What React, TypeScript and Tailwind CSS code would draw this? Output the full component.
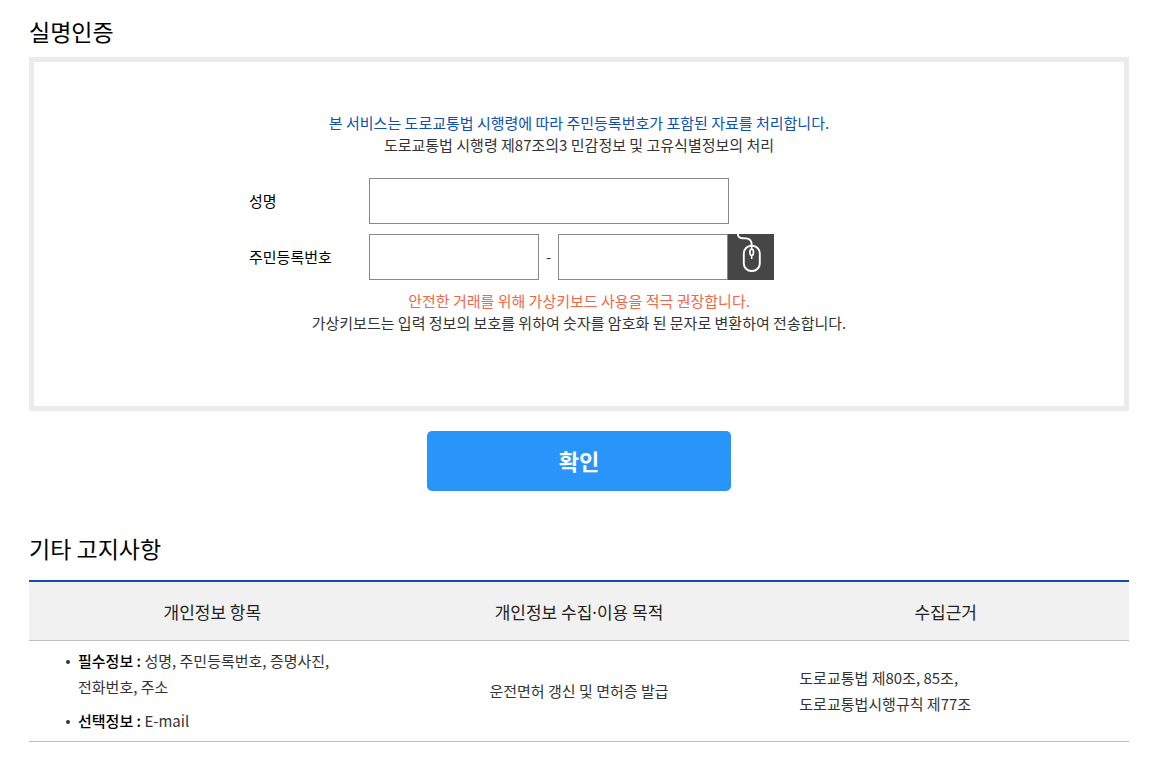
import React from "react";

function MouseIcon() {
  return (
    <svg viewBox="0 0 46 46" className="size-full" fill="none" stroke="#fff" aria-hidden="true">
      <path d="M9.800 0C10 2.800 11.500 4.200 14.500 4.300L18 4.400C22 4.600 23.700 6.500 23.700 11" strokeWidth="1.900" />
      <rect x="15.800" y="11.800" width="16" height="25.200" rx="7.600" strokeWidth="1.900" />
      <path d="M23.700 11V15.500M23.700 21V25" strokeWidth="1.500" />
      <ellipse cx="23.700" cy="18.300" rx="1.800" ry="3.200" strokeWidth="1.700" />
    </svg>
  );
}

const inputClass = "h-[46px] border border-[#888888] bg-white px-3 text-[15px] text-black outline-none";

function Bullet({ label, children }: { label: string; children: React.ReactNode }) {
  return (
    <li className="flex">
      <span className="mt-3 mr-2 size-1 shrink-0 rounded-full bg-[#333333]" aria-hidden="true" />
      <span>
        <strong className="font-medium text-black">{label} :</strong> {children}
      </span>
    </li>
  );
}

export default function App() {
  return (
    <main className="bg-white pt-3.5 pr-[37px] pb-5 pl-[29px] font-['Noto_Sans_CJK_KR',sans-serif] text-[15px] leading-[22px] text-[#333333]">
      <section>
        <h2 className="text-[23px] leading-[34px] text-black">실명인증</h2>
        <form onSubmit={(e) => e.preventDefault()}>
          <div className="mt-[9px] border-5 border-[#ebebeb] pt-[50px] pb-[72px]">
            <p className="text-center text-[#0f4fb0]">
              본 서비스는 도로교통법 시행령에 따라 주민등록번호가 포함된 자료를 처리합니다.
            </p>
            <p className="text-center">도로교통법 시행령 제87조의3 민감정보 및 고유식별정보의 처리</p>

            <div className="mx-auto mt-[22px] mb-2.5 flex max-w-[660px] flex-col gap-2.5">
              <div className="flex items-center">
                <label htmlFor="name" className="w-[120px] text-black">성명</label>
                <input id="name" type="text" className={`${inputClass} w-[360px]`} />
              </div>
              <div className="flex items-center">
                <label htmlFor="rrn-front" className="w-[120px] text-black">주민등록번호</label>
                <input id="rrn-front" type="text" className={`${inputClass} w-[170px]`} />
                <span className="w-[19px] text-center">-</span>
                <input type="password" aria-label="주민등록번호 뒷자리" className={`${inputClass} w-[170px]`} />
                <button type="button" aria-label="가상키보드" className="size-[46px] bg-[#464646]">
                  <MouseIcon />
                </button>
              </div>
            </div>

            <p className="text-center text-[#f26649]">안전한 거래를 위해 가상키보드 사용을 적극 권장합니다.</p>
            <p className="text-center">
              가상키보드는 입력 정보의 보호를 위하여 숫자를 암호화 된 문자로 변환하여 전송합니다.
            </p>
          </div>
          <button
            type="submit"
            className="mx-auto mt-5 block h-[60px] w-[304px] rounded-[5px] bg-[#2994f9] pb-0.5 text-[22px] font-bold text-white"
          >
            확인
          </button>
        </form>
      </section>

      <section className="mt-10">
        <h2 className="text-[23px] leading-[34px] text-black">기타 고지사항</h2>
        <table className="mt-[15px] w-full table-fixed border-separate border-spacing-0">
          <thead>
            <tr className="bg-[#f1f1f1] text-[17px] text-[#222222] *:h-[61px] *:border-t-2 *:border-b *:border-t-[#0f4fb0] *:border-b-[#c0c0c0] *:pt-0.5 *:font-normal">
              <th scope="col">개인정보 항목</th>
              <th scope="col">
                개인정보 수집<span className="font-['Noto_Sans',sans-serif]">·</span>이용 목적
              </th>
              <th scope="col">수집근거</th>
            </tr>
          </thead>
          <tbody>
            <tr className="leading-[26px] *:border-b *:border-[#c0c0c0] *:px-[37px] *:py-[7px]">
              <td>
                <ul className="flex flex-col gap-2">
                  <Bullet label="필수정보">
                    성명, 주민등록번호, 증명사진,
                    <br />
                    전화번호, 주소
                  </Bullet>
                  <Bullet label="선택정보">E-mail</Bullet>
                </ul>
              </td>
              <td className="text-center">운전면허 갱신 및 면허증 발급</td>
              <td>
                도로교통법 제80조, 85조,
                <br />
                도로교통법시행규칙 제77조
              </td>
            </tr>
          </tbody>
        </table>
      </section>
    </main>
  );
}
